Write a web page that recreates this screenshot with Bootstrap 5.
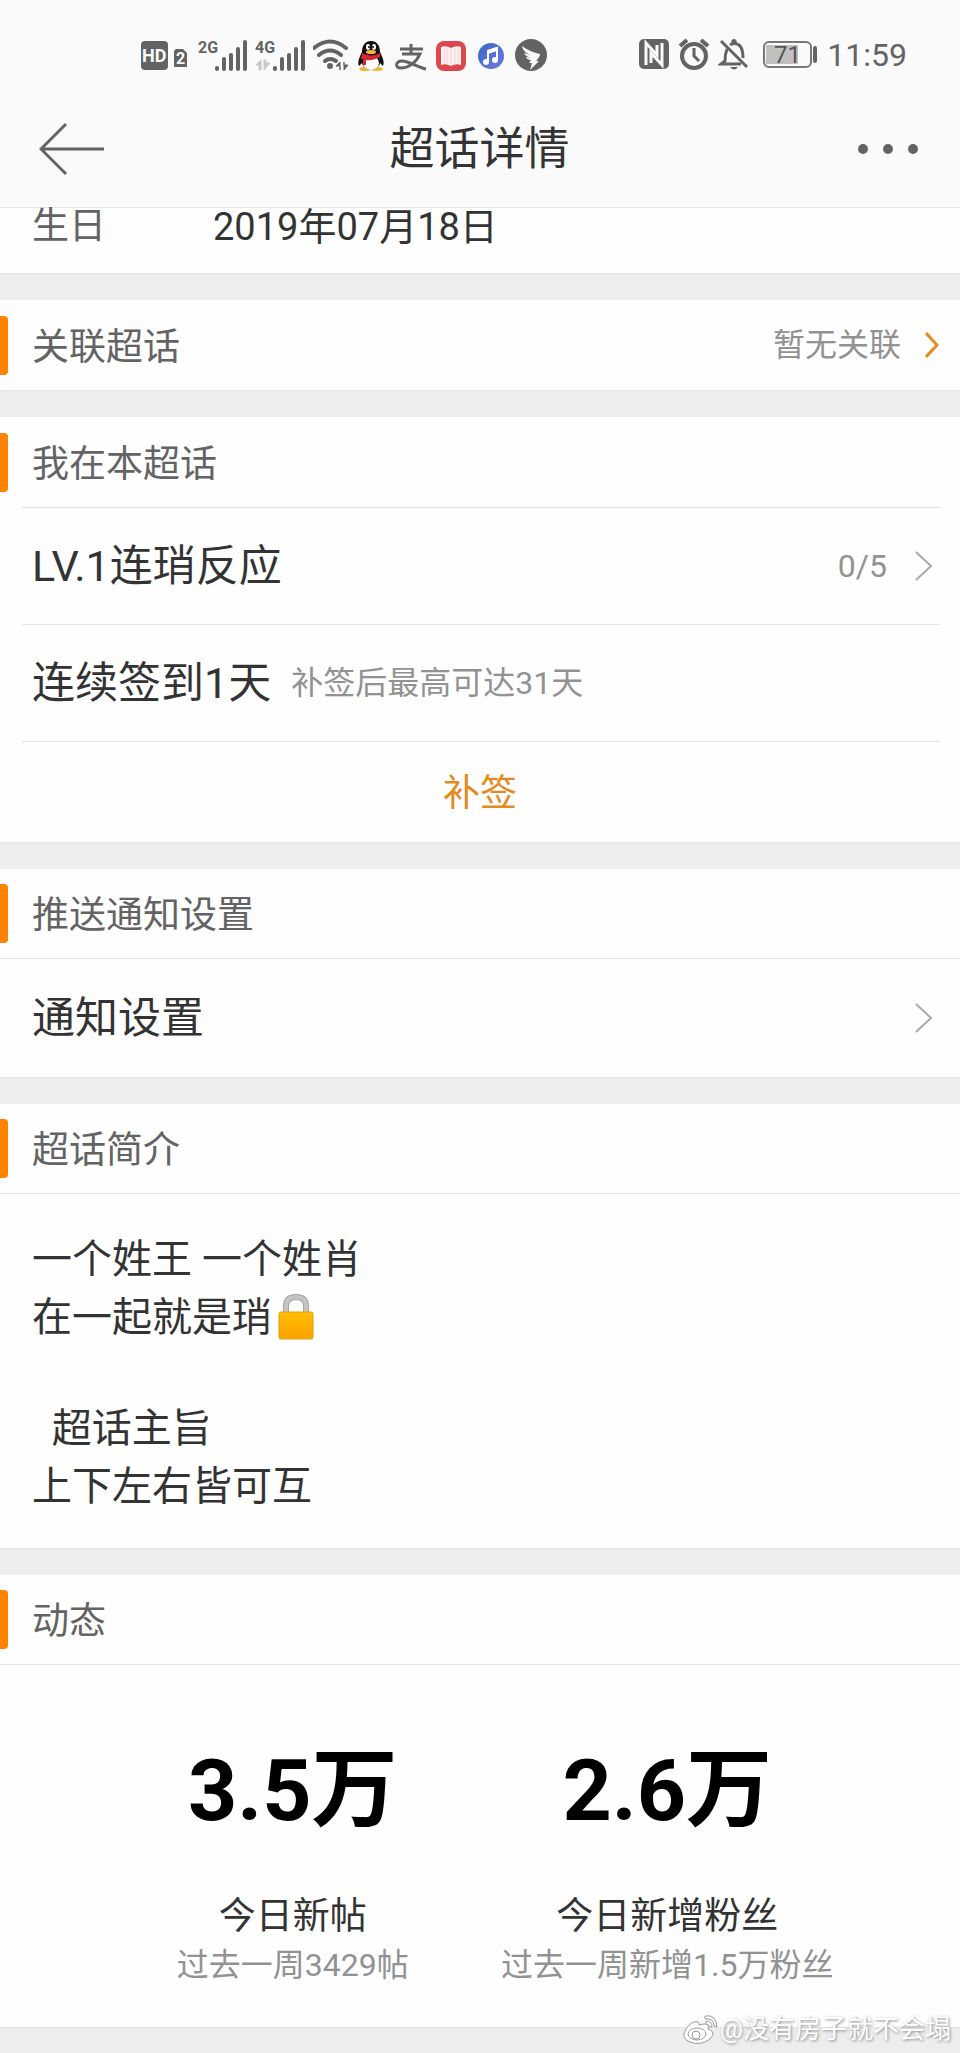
<!DOCTYPE html>
<html lang="zh-CN">
<head>
<meta charset="utf-8">
<meta name="viewport" content="width=device-width, initial-scale=1">
<title>超话详情</title>
<link rel="stylesheet" href="https://cdn.jsdelivr.net/npm/bootstrap@5.3.0/dist/css/bootstrap.min.css">
<style>
  body { background: #ededed; color: #333; font-family: Roboto, "Noto Sans CJK SC", sans-serif; font-size: 37px; line-height: 50px; }
  h1, h2, p, dl, dt, dd { margin: 0; font-weight: 400; line-height: inherit; }
  a { color: inherit; text-decoration: none; }
  svg { display: block; flex: none; }
  .page-top { background: #fafafa; border-bottom: 1px solid #e4e4e4; }
  .status { height: 90px; padding: 20px 53px 0 140px; color: #636363; }
  .status text { font-family: Roboto, sans-serif; }
  .clock { font-size: 32px; line-height: 38px; }
  .appbar { height: 117px; padding: 0 40px 0 39px; }
  .appbar h1 { font-size: 45px; padding-top: 3px; }
  .side { width: 90px; }
  .panel { background: #fefefe; border-bottom: 1px solid #e4e4e4; margin-bottom: 26px; }
  .panel-title { height: 90px; padding-right: 21px; color: #636363; }
  .panel-title h2 { font-size: 37px; padding-top: 5px; }
  .panel-title::before { content: ""; width: 8px; height: 59px; margin-right: 24px; background: #ff8200; border-radius: 0 4px 4px 0; }
  .ruled { border-bottom: 1px solid #e6e6e6; }
  .inset { margin: 0 20px 0 22px; }
  .item { height: 118px; font-size: 43px; }
  .inset .item { height: 117px; padding: 0 7px 0 10px; }
  .full { padding: 0 27px 0 32px; }
  .soft { color: #929292; font-size: 32px; }
  .signin { gap: 20px; }
  .birthday { line-height: 38px; padding: 0 32px 27px; }
  .birthday dt { width: 181px; color: #636363; }
  .birthday dd { font-size: 38px; }
  .checkin { height: 100px; padding-top: 4px; color: #e58a1c; background: none; border: 0; font-size: 37px; }
  .intro { font-size: 40px; line-height: 58px; padding: 37px 32px 32px; white-space: pre-wrap; }
  .intro p + p { margin-top: 53px; }
  .intro svg { display: inline-block; vertical-align: -9px; margin-left: 6px; }
  .stats { padding: 76px 11% 38px; line-height: 48px; }
  .figure-num { color: #000; font-size: 86px; font-weight: 700; line-height: 100px; margin-bottom: 52px; }
  .credit { position: absolute; right: 9px; bottom: 7px; color: #fff; font-size: 26px; line-height: 36px; text-shadow: 1px 1px 3px #888; }
</style>
</head>
<body>
<div class="position-relative overflow-hidden">
<header class="page-top">
  <div class="status d-flex align-items-center justify-content-between">
    <div class="d-flex gap-2">
      <svg width="49" height="36" aria-label="HD 2"><rect x="1" y="4" width="27" height="29" rx="4" fill="#636363"/><text x="2" y="25" font-size="18" font-weight="700" fill="#fafafa">HD</text><path d="M36 12h7l4 4v14H34V14z" fill="#636363"/><text x="36" y="27" font-size="16" font-weight="700" fill="#fafafa">2</text></svg>
      <svg width="50" height="36" aria-label="2G"><text x="1" y="16" font-size="16" font-weight="700" fill="#636363">2G</text><path d="M20 31v1M27 22v10M34 18v14M41 12v20M48 5v27" stroke="#636363" stroke-width="4" stroke-linecap="round"/></svg>
      <svg width="50" height="36" aria-label="4G"><text x="0" y="16" font-size="16" font-weight="700" fill="#636363">4G</text><path d="M6 23v10H4V28H1zM9 23v10l6-7h-4v-3z" fill="#c8c8c8" stroke="#c8c8c8"/><path d="M20 31v1M27 22v10M34 18v14M41 12v20M48 5v27" stroke="#636363" stroke-width="4" stroke-linecap="round"/></svg>
      <svg width="36" height="36" aria-label="Wi-Fi"><g fill="none" stroke="#636363" stroke-width="4" stroke-linecap="round"><path d="M1 11Q17 -2 33 11M6 18Q17 9 28 18M12 24Q17 20 23 24"/></g><circle cx="17" cy="29" r="3" fill="#636363"/><path d="M27 33v-8l-4 4h4zM31 25v8l4-5h-4z" fill="#636363" stroke="#636363"/></svg>
      <svg width="28" height="36" aria-label="QQ"><ellipse cx="8" cy="32" rx="6" ry="2" fill="#f2b632"/><ellipse cx="20" cy="32" rx="6" ry="2" fill="#f2b632"/><path d="M14 4C7 4 5 10 5 15C3 19 0 25 2 29L5 26C7 35 21 35 23 26L26 29C28 25 25 19 23 15C23 10 21 4 14 4z" fill="#111"/><ellipse cx="14" cy="26" rx="8" ry="7" fill="#fff"/><path d="M5 16q9 5 18 0v4q-8 4-14 3v5H6v-6H4z" fill="#d82630"/><ellipse cx="11" cy="10" rx="2" ry="3" fill="#fff"/><ellipse cx="17" cy="10" rx="2" ry="3" fill="#fff"/><circle cx="12" cy="10" r="1"/><circle cx="16" cy="10" r="1"/><ellipse cx="14" cy="15" rx="5" ry="2" fill="#f5b934"/></svg>
      <svg width="34" height="36" aria-label="支付宝"><path d="M7 12H30M18 7V17M9 17H27C23 26 15 31 8 31C1 31 3 24 9 24C16 24 24 30 33 32" fill="none" stroke="#636363" stroke-width="3"/></svg>
      <svg width="32" height="36"><rect x="1" y="4" width="30" height="30" rx="8" fill="#dc474d"/><path d="M6 10q5-2 10 1q5-3 10-1v18q-5-2-10 1q-5-3-10-1z" fill="#fff0f1"/><path d="M16 11v18M9 11v16M12 11v16M20 11v16M23 11v16" stroke="#f3d5da" stroke-width="1"/></svg>
      <svg width="32" height="36"><defs><linearGradient id="music" x2="1" y2="1"><stop stop-color="#3768c8"/><stop offset="1" stop-color="#7377dd"/></linearGradient></defs><circle cx="16" cy="19" r="13" fill="url(#music)"/><path d="M13 25V14L22 11V23" fill="none" stroke="#fff" stroke-width="2"/><path d="M13 13l9-3v4l-9 3z" fill="#fff"/><circle cx="11" cy="25" r="3" fill="#fff"/><circle cx="20" cy="23" r="3" fill="#fff"/></svg>
      <svg width="32" height="36"><circle cx="16" cy="18" r="16" fill="#636363"/><path d="M7 9q8 6 18 8q0 3-4 7h3l-9 9l2-7h-3l2-3q-4 0-5-3l5 1q-6-2-7-5l6 2q-7-3-8-9z" fill="#fafafa"/></svg>
    </div>
    <div class="d-flex gap-2">
      <svg width="32" height="36" aria-label="NFC"><rect x="1" y="3" width="30" height="30" rx="5" fill="#636363"/><path d="M8 29V7l11 12V9M24 7v22L13 17v10" fill="none" stroke="#fafafa" stroke-width="3"/></svg>
      <svg width="32" height="36" aria-label="闹钟"><g fill="none" stroke="#636363" stroke-width="4"><circle cx="16" cy="20" r="12"/><path d="M2 10L9 4M30 10L23 4"/><path d="M16 12v8l5 5" stroke-width="3"/></g></svg>
      <svg width="32" height="36" aria-label="静音"><g fill="none" stroke="#636363" stroke-width="3"><path d="M9 13Q7 18 7 25L3 28H23M12 9Q16 6 21 9Q25 12 25 22"/><path d="M3 5L29 31"/></g><path d="M13 8q0-5 3-5t3 5zM12 31h8q-4 5-8 0z" fill="#636363"/></svg>
      <svg width="61" height="36" aria-label="电量 71%"><rect x="6" y="6" width="47" height="25" rx="5" fill="none" stroke="#777" stroke-width="2"/><rect x="8" y="9" width="32" height="19" fill="#c0c0c0"/><path d="M57 12v13" stroke="#636363" stroke-width="4" stroke-linecap="round"/><text x="16" y="27" font-size="24" fill="#555">71</text></svg>
      <span class="clock">11:59</span>
    </div>
  </div>
  <nav class="appbar d-flex align-items-center justify-content-between">
    <button class="btn p-0 border-0 side" aria-label="返回"><svg width="66" height="54" fill="none" stroke="#636363" stroke-width="3"><path d="M65 27H2M27 2L2 27L27 52"/></svg></button>
    <h1>超话详情</h1>
    <button class="btn p-0 border-0 side d-flex justify-content-end" aria-label="更多"><svg width="62" height="12" fill="#636363"><circle cx="5" cy="6" r="5"/><circle cx="30" cy="6" r="5"/><circle cx="55" cy="6" r="5"/></svg></button>
  </nav>
</header>

<main>
  <section class="panel">
    <dl class="birthday d-flex"><dt>生日</dt><dd>2019年07月18日</dd></dl>
  </section>

  <section class="panel">
    <a href="#" class="panel-title d-flex align-items-center"><h2>关联超话</h2><span class="soft ms-auto me-4">暂无关联</span><svg width="14" height="28" fill="none" stroke="#e58a1c" stroke-width="3"><path d="M1 2L12 14L1 26"/></svg></a>
  </section>

  <section class="panel">
    <div class="panel-title d-flex align-items-center"><h2>我在本超话</h2></div>
    <div class="inset border-top">
      <a href="#" class="item ruled d-flex align-items-center"><span>LV.1连琑反应</span><span class="soft ms-auto me-4">0/5</span><svg width="22" height="30" fill="none" stroke="#aaa" stroke-width="2"><path d="M5 1L20 15L5 29"/></svg></a>
      <div class="item ruled signin d-flex align-items-center"><span>连续签到1天</span><span class="soft">补签后最高可达31天</span></div>
    </div>
    <button class="checkin d-block w-100">补签</button>
  </section>

  <section class="panel">
    <div class="panel-title ruled d-flex align-items-center"><h2>推送通知设置</h2></div>
    <a href="#" class="item full d-flex align-items-center justify-content-between">通知设置<svg width="20" height="30" fill="none" stroke="#aaa" stroke-width="2"><path d="M3 1L18 15L3 29"/></svg></a>
  </section>

  <section class="panel">
    <div class="panel-title ruled d-flex align-items-center"><h2>超话简介</h2></div>
    <div class="intro"><p>一个姓王 一个姓肖<br>在一起就是琑<svg width="36" height="46" viewBox="0 0 36 46" role="img" aria-label="锁"><defs><linearGradient id="lock" x2="0" y2="1"><stop stop-color="#ffbd00"/><stop offset="1" stop-color="#ffa200"/></linearGradient></defs><path d="M8 20V12Q8 3 18 3T28 12V20" fill="none" stroke="#a5a5a5" stroke-width="6"/><path d="M8 20V12Q8 3 18 3T28 12V20" fill="none" stroke="#c4c4c4" stroke-width="4"/><rect x="1" y="18" width="34" height="27" rx="2" fill="url(#lock)" stroke="#dfa019"/></svg></p><p>  超话主旨<br>上下左右皆可互</p></div>
  </section>

  <section class="panel">
    <div class="panel-title ruled d-flex align-items-center"><h2>动态</h2></div>
    <div class="stats"><div class="row g-0 text-center text-nowrap">
      <div class="col-6"><div class="figure-num">3.5万</div><div>今日新帖</div><div class="soft">过去一周3429帖</div></div>
      <div class="col-6"><div class="figure-num">2.6万</div><div>今日新增粉丝</div><div class="soft">过去一周新增1.5万粉丝</div></div>
    </div></div>
  </section>
</main>
<div class="credit d-flex align-items-center">
  <svg width="38" height="32" viewBox="0 0 38 32" fill="#fff" stroke="#999"><path d="M16 9q-6-2-12 7q-6 9 4 13q11 4 20-3q7-7-2-10q2-5-3-5q-3 0-6 1q1-2-1-3z"/><ellipse cx="15" cy="21" rx="9" ry="6"/><circle cx="14" cy="22" r="4"/><path d="M23 3q11-2 12 11l-3-1q0-8-9-7zM24 8q6 0 6 6h-3q0-3-3-3z"/></svg>
  <span>@没有房子就不会塌</span>
</div>
</div>
<script src="https://cdn.jsdelivr.net/npm/bootstrap@5.3.0/dist/js/bootstrap.bundle.min.js"></script>
</body>
</html>
